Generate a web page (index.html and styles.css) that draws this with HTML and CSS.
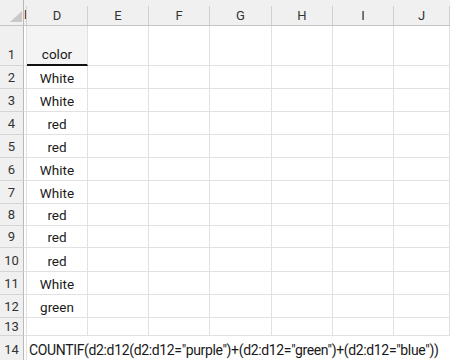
FILE: index.html
```html
<!DOCTYPE html>
<html>
<head>
<meta charset="utf-8">
<title>Sheet1</title>
<link rel="stylesheet" href="styles.css">
</head>
<body>
<div class="sheet">

<div class="row hd">
  <div class="corner"><span class="tri"></span></div>
  <div class="cut">E</div>
  <div>D</div><div>E</div><div>F</div><div>G</div><div>H</div><div>I</div><div>J</div>
</div>

<div class="row h40">
  <div class="rh">1</div><div></div>
  <div class="mid title">color</div>
  <div></div><div></div><div></div><div></div><div></div><div></div>
</div>

<div class="row h23">
  <div class="rh">2</div><div></div><div class="mid">White</div>
  <div></div><div></div><div></div><div></div><div></div><div></div>
</div>
<div class="row h23">
  <div class="rh">3</div><div></div><div class="mid">White</div>
  <div></div><div></div><div></div><div></div><div></div><div></div>
</div>
<div class="row h23">
  <div class="rh">4</div><div></div><div class="mid">red</div>
  <div></div><div></div><div></div><div></div><div></div><div></div>
</div>
<div class="row h23">
  <div class="rh">5</div><div></div><div class="mid">red</div>
  <div></div><div></div><div></div><div></div><div></div><div></div>
</div>
<div class="row h23">
  <div class="rh">6</div><div></div><div class="mid">White</div>
  <div></div><div></div><div></div><div></div><div></div><div></div>
</div>
<div class="row h23">
  <div class="rh">7</div><div></div><div class="mid">White</div>
  <div></div><div></div><div></div><div></div><div></div><div></div>
</div>
<div class="row h22">
  <div class="rh">8</div><div></div><div class="mid">red</div>
  <div></div><div></div><div></div><div></div><div></div><div></div>
</div>
<div class="row h22">
  <div class="rh">9</div><div></div><div class="mid">red</div>
  <div></div><div></div><div></div><div></div><div></div><div></div>
</div>
<div class="row h24">
  <div class="rh">10</div><div></div><div class="mid">red</div>
  <div></div><div></div><div></div><div></div><div></div><div></div>
</div>
<div class="row h23">
  <div class="rh">11</div><div></div><div class="mid">White</div>
  <div></div><div></div><div></div><div></div><div></div><div></div>
</div>
<div class="row h23">
  <div class="rh">12</div><div></div><div class="mid">green</div>
  <div></div><div></div><div></div><div></div><div></div><div></div>
</div>
<div class="row h18">
  <div class="rh">13</div><div></div><div></div>
  <div></div><div></div><div></div><div></div><div></div><div></div>
</div>
<div class="row h25">
  <div class="rh">14</div><div></div>
  <div class="formula">COUNTIF(d2:d12(d2:d12="purple")+(d2:d12="green")+(d2:d12="blue"))</div>
</div>

</div>
</body>
</html>
```

FILE: styles.css
```css
html, body {
   margin: 0;
   padding: 0;
   background-color: white;
   overflow: hidden;
}

.sheet {
   width: 450px;
   height: 360px;
   overflow: hidden;
   font-family: Roboto, "Liberation Sans", sans-serif;
   color: #1a1a1a;
}

.row {
   display: grid;
   grid-template-columns: 24px 3px 61px 61px 61px 62px 61px 61px 1fr;
   box-sizing: border-box;
}

.row > div {
   box-sizing: border-box;
   border-right: 1px solid #e1e1e1;
   border-bottom: 1px solid #e1e1e1;
   display: flex;
   align-items: flex-end;
   font-size: 13.5px;
   line-height: 20px;
   white-space: nowrap;
   overflow: hidden;
}

.h40 { height: 40px; }
.h25 { height: 25px; }
.h24 { height: 24px; }
.h23 { height: 23px; }
.h22 { height: 22px; }
.h18 { height: 18px; }

/* column header */
.hd {
   height: 26px;
   background-color: #f0f0f0;
   border-bottom: 1px solid #c4c4c4;
   align-items: end;
}

.hd > div {
   height: 19px;
   border-bottom: none;
   border-right: 1px solid #d0d0d0;
   justify-content: center;
   align-items: center;
   font-size: 13px;
   line-height: 19px;
   color: #333;
}

.hd > .corner {
   height: 25px;
   border-right: 1px solid #b8b8b8;
   justify-content: flex-end;
   align-items: flex-end;
   padding: 0 1px 3px 0;
}

.tri {
   display: block;
   width: 12px;
   height: 11px;
   background-color: #c8c8c8;
   clip-path: polygon(100% 0, 100% 100%, 0 100%);
}

.hd > .cut {
   justify-content: flex-start;
   font-size: 12px;
   color: #333;
}

/* row header */
.row > .rh {
   background-color: #f0f0f0;
   border-right: 1px solid #b8b8b8;
   border-bottom: 1px solid #d4d4d4;
   justify-content: center;
   align-items: flex-end;
   font-size: 13px;
   line-height: 20px;
   color: #333;
}

.h18 > .rh {
   line-height: 17px;
}

.mid {
   justify-content: center;
}

.row > .title {
   background-color: #f4f4f4;
   border-bottom: 2px solid #111;
}

.row > .formula {
   grid-column: 3 / -1;
   border-right: none;
   padding-left: 2px;
   font-size: 14px;
   letter-spacing: -0.35px;
}
```
